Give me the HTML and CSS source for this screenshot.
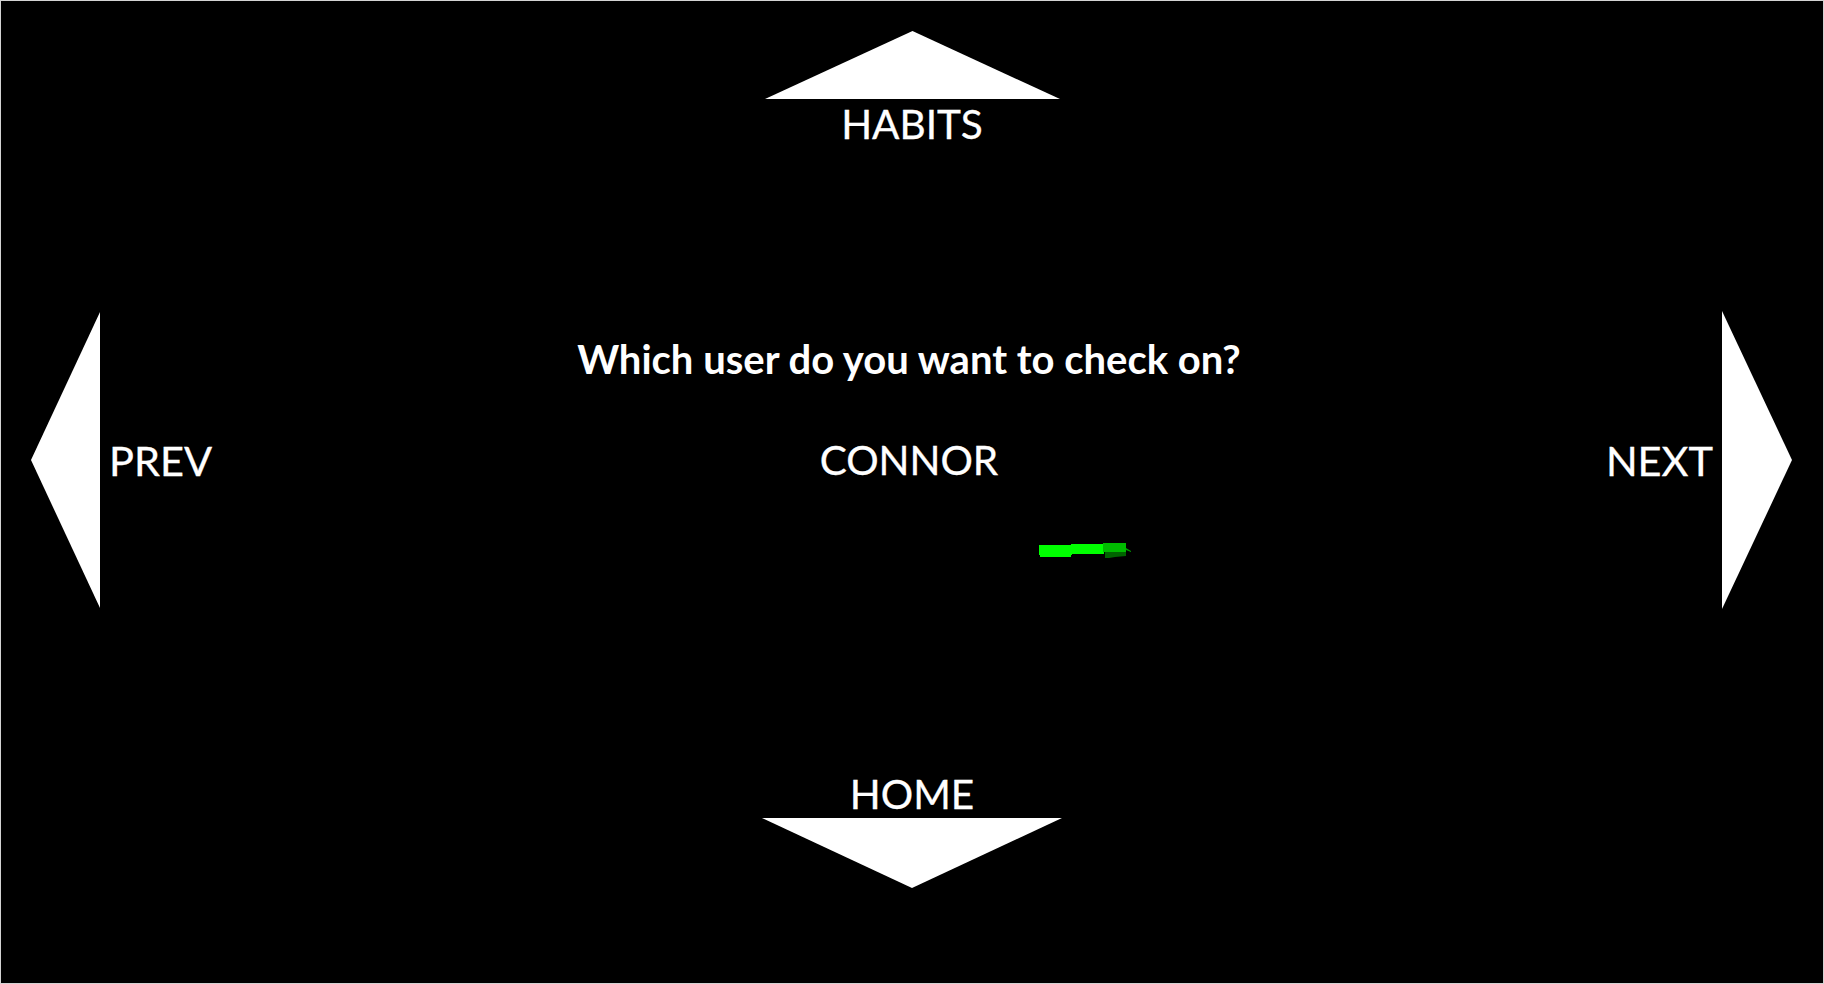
FILE: index.html
```html
<!DOCTYPE html>
<html lang="en">
<head>
<meta charset="utf-8">
<title>Check on user</title>
<link rel="stylesheet" href="styles.css">
</head>
<body>
<div class="screen">
  <div class="nav-top">
    <svg class="tri-h" width="295" height="68" viewBox="0 0 295 68"><polygon points="0,68 147.5,0 295,68" fill="#fff"/></svg>
    <div class="label">HABITS</div>
  </div>

  <div class="middle">
    <div class="nav-side nav-left">
      <svg class="tri-v" width="69" height="296" viewBox="0 0 69 296"><polygon points="69,0 0,148 69,296" fill="#fff"/></svg>
      <div class="label side">PREV</div>
    </div>

    <div class="center">
      <div class="question">Which user do you want to check on?</div>
      <div class="label user">CONNOR</div>
      <div class="loader-row">
        <svg class="loader" width="92" height="16" viewBox="0 0 92 16">
          <rect x="0" y="2" width="33" height="10" fill="#00ff00"/>
          <rect x="1" y="11" width="31" height="3" fill="#00ff00"/>
          <rect x="32" y="1" width="33" height="10" fill="#00ff00"/>
          <rect x="64" y="0" width="23" height="9" fill="#00bb00"/>
          <polygon points="66,9 87,9 87,13 76,14 70,15 66,15" fill="#006400"/>
          <polygon points="87,5 92,8 92,9 87,7" fill="#00a000"/>
        </svg>
      </div>
    </div>

    <div class="nav-side nav-right">
      <div class="label side">NEXT</div>
      <svg class="tri-v" width="70" height="298" viewBox="0 0 70 298"><polygon points="0,0 70,149 0,298" fill="#fff"/></svg>
    </div>
  </div>

  <div class="nav-bottom">
    <div class="label">HOME</div>
    <svg class="tri-h" width="300" height="70" viewBox="0 0 300 70"><polygon points="0,0 300,0 150,70" fill="#fff"/></svg>
  </div>
</div>
</body>
</html>
```

FILE: styles.css
```css
html, body {
  margin: 0;
  padding: 0;
  background: #000;
}

body {
  font-family: Lato, "Noto Sans", sans-serif;
  color: #fff;
}

.screen {
  box-sizing: border-box;
  width: 1824px;
  height: 984px;
  border: 1px solid #d3d3d3;
  background: #000;
  display: flex;
  flex-direction: column;
}

.label {
  font-size: 40.5px;
  line-height: 48px;
  font-weight: 400;
  white-space: nowrap;
  -webkit-text-stroke: 0.3px #fff;
}

.label.side {
  font-size: 41.5px;
}

.tri-h, .tri-v {
  display: block;
  flex: none;
}

.nav-top {
  padding-top: 30px;
  display: flex;
  flex-direction: column;
  align-items: center;
  gap: 1px;
}

.nav-bottom {
  padding-bottom: 95px;
  display: flex;
  flex-direction: column;
  align-items: center;
}

.middle {
  flex: 1;
  display: flex;
  align-items: center;
  padding: 0 31px 0 30px;
}

.nav-side {
  display: flex;
  align-items: center;
  gap: 9px;
  padding-top: 2px;
}

.center {
  flex: 1;
  display: flex;
  flex-direction: column;
  align-items: center;
}

.question {
  font-size: 40px;
  line-height: 48px;
  font-weight: 700;
  white-space: nowrap;
}

.user {
  margin-top: 53px;
}

.loader-row {
  margin-top: 59px;
  margin-bottom: 24px;
  display: flex;
  justify-content: center;
}

.loader {
  display: block;
  margin-left: 353px;
}
```
